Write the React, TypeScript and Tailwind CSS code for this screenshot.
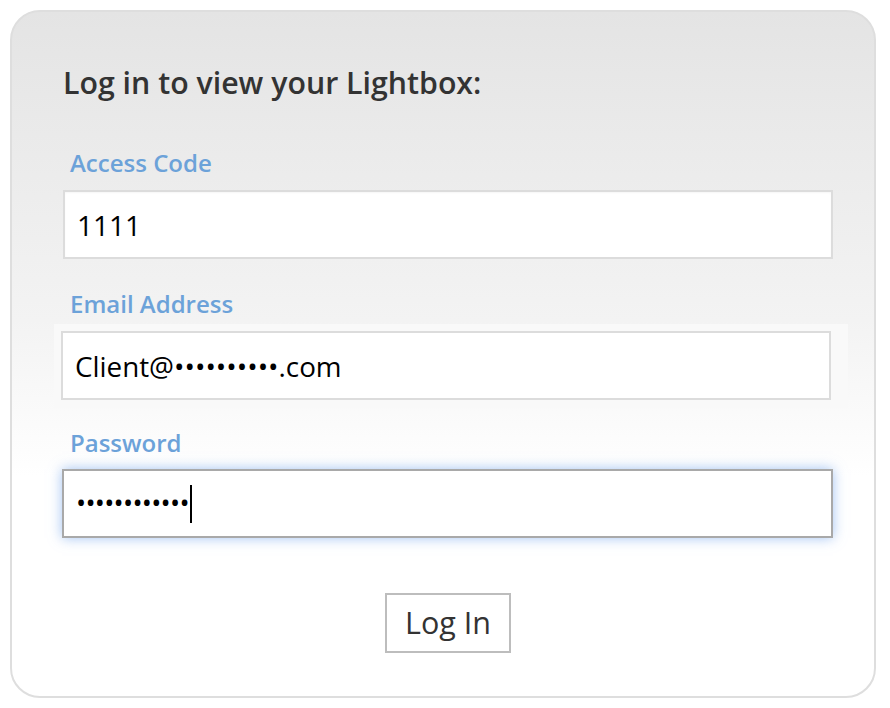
import React from "react";

export default function App() {
  return (
    <div className="w-[890px] h-[708px] bg-white pt-[10px] pl-[10px]" style={{ fontFamily: '"Open Sans", "Liberation Sans", sans-serif' }}>
      <div className="w-[866px] h-[688px] rounded-[30px] border-2 border-[#dedede] bg-[linear-gradient(to_bottom,#e4e4e4_0%,#f3f3f3_45%,#ffffff_68%)] pt-[53px] pl-[51px]">
        <div className="w-[770px] flex flex-col">
          <h1 className="text-[30.3px] leading-[36px] font-semibold text-[#333333]">Log in to view your Lightbox:</h1>

          <label className="mt-[48px] pl-[7px] text-[24px] leading-[28px] font-semibold text-[#6ca2d9]">Access Code</label>
          <input
            readOnly
            value="1111"
            className="mt-[13px] h-[69px] w-[770px] border-2 border-[#dcdcdc] bg-white pl-[12px] text-[28px] text-black outline-none shadow-[inset_0_1px_2px_rgba(0,0,0,0.04)]"
            style={{ fontFamily: '"Open Sans", sans-serif' }}
          />

          <label className="mt-[31px] pl-[7px] text-[24px] leading-[28px] font-semibold text-[#6ca2d9]">Email Address</label>
          <div className="mt-[6px] ml-[-9px] w-[794px] bg-[#f9f9f9] pt-[7px] pb-[8px] pl-[7px]">
            <input
              readOnly
              value="Client@••••••••••.com"
              className="block h-[69px] w-[770px] border-2 border-[#dcdcdc] bg-white pl-[12px] text-[27.8px] text-black outline-none"
              style={{ fontFamily: '"Open Sans", sans-serif' }}
            />
          </div>

          <label className="mt-[21px] pl-[7px] text-[24px] leading-[28px] font-semibold text-[#6ca2d9]">Password</label>
          <div className="mt-[12px] ml-[-1px] h-[69px] w-[771px] border-2 border-[#a9a9a9] bg-white pl-[12px] flex items-center shadow-[0_0_12px_rgba(100,155,235,0.6)]">
            <span className="text-[27px] text-black tracking-[-0.75px]">••••••••••••</span>
            <span className="ml-[1px] inline-block h-[38px] w-[2px] bg-black"></span>
          </div>

          <div className="mt-[55px] flex justify-center">
            <button className="h-[60px] w-[126px] border-2 border-[#bdbdbd] bg-white text-[30.5px] text-[#333333]">Log In</button>
          </div>
        </div>
      </div>
    </div>
  );
}
